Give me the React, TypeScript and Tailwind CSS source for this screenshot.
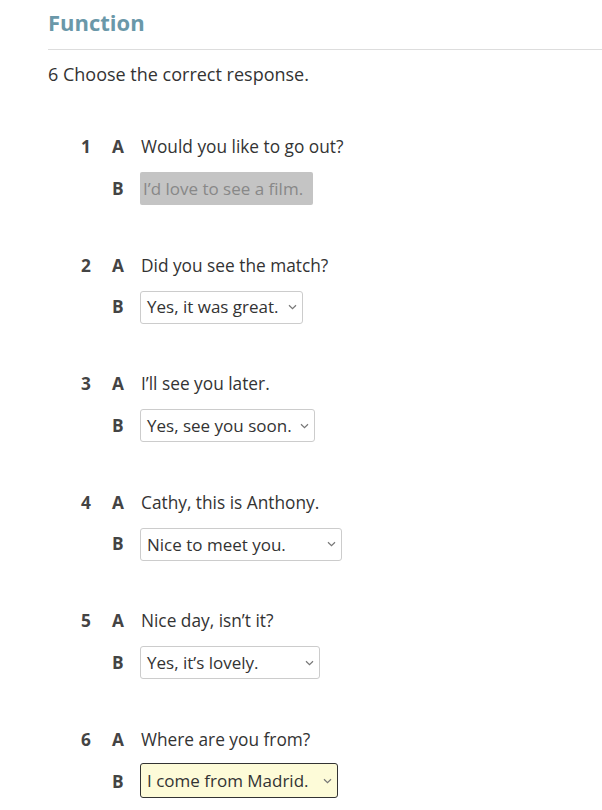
const items = [
  { n: 1, a: "Would you like to go out?", b: "I’d love to see a film.", w: "w-[173px]", state: "done" },
  { n: 2, a: "Did you see the match?", b: "Yes, it was great.", w: "w-[163px]", state: "open" },
  { n: 3, a: "I’ll see you later.", b: "Yes, see you soon.", w: "w-[175px]", state: "open" },
  { n: 4, a: "Cathy, this is Anthony.", b: "Nice to meet you.", w: "w-[202px]", state: "open" },
  { n: 5, a: "Nice day, isn’t it?", b: "Yes, it’s lovely.", w: "w-[180px]", state: "open" },
  { n: 6, a: "Where are you from?", b: "I come from Madrid.", w: "w-[198px]", state: "active" },
];

function Chevron() {
  return (
    <svg width="9" height="6" viewBox="0 0 9 6" className="shrink-0">
      <path d="M1 1.2 L4.5 4.6 L8 1.2" fill="none" stroke="#777" strokeWidth="1.2" />
    </svg>
  );
}

function Answer({ text, w, state }: { text: string; w: string; state: string }) {
  if (state === "done") {
    return (
      <div className={`${w} h-[33px] flex items-center px-[3px] rounded-[2px] bg-[#c4c4c4] text-[#888888] text-[17px]`}>
        {text}
      </div>
    );
  }
  const look =
    state === "active"
      ? "h-[35px] -mt-px bg-[#fdfbd8] border-[#333333]"
      : "h-[33px] bg-white border-[#cccccc]";
  return (
    <div className={`${w} flex items-center justify-between pl-[6px] pr-[5px] border rounded-[3px] text-[#333333] text-[17px] ${look}`}>
      <span>{text}</span>
      <Chevron />
    </div>
  );
}

export default function App() {
  return (
    <div className="min-h-[810px] bg-white font-['Open_Sans',sans-serif] text-[#333333] pl-[48px]">
      <h2 className="pt-[7px] h-[49px] text-[22px] font-bold text-[#6a98a9] leading-[30px]">Function</h2>
      <div className="h-px bg-[#dddddd]" />
      <p className="mt-[12px] text-[18px] leading-[24px]">6 Choose the correct response.</p>

      <div className="mt-[49px] flex flex-col gap-[48.6px] text-[17.3px]">
        {items.map((it) => (
          <div key={it.n} className="flex flex-col gap-[13px]">
            <div className="flex items-center h-[24px] leading-[24px]">
              <span className="w-[31px] pl-[33px] box-content font-bold text-[#444444]">{it.n}</span>
              <span className="w-[29px] font-bold text-[#444444]">A</span>
              <span>{it.a}</span>
            </div>
            <div className="flex items-center h-[33px]">
              <span className="w-[92px] pl-[64px] font-bold text-[#444444]">B</span>
              <Answer text={it.b} w={it.w} state={it.state} />
            </div>
          </div>
        ))}
      </div>
    </div>
  );
}
